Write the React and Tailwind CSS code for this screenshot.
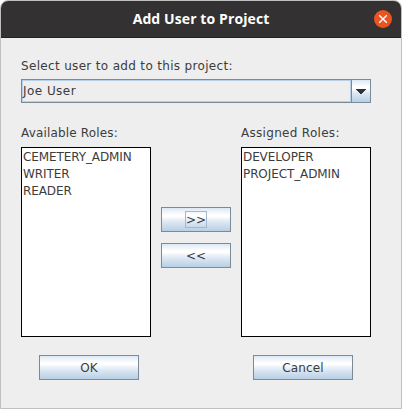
import React from "react";

function SwingButton({ children, className = "", focused = false }) {
  return (
    <button
      type="button"
      className={`flex h-[25px] items-center justify-center border border-[#7a8a99] bg-[linear-gradient(to_bottom,#dde8f3_0%,#ffffff_30%,#ffffff_36%,#dde8f3_60%,#b8cfe5_100%)] text-[12px] leading-[14px] ${className}`}
    >
      <span className={focused ? "flex h-[17px] w-[22px] items-center justify-center border border-[#a3b8cc]" : ""}>
        {children}
      </span>
    </button>
  );
}

function RoleList({ label, roles, labelClass }) {
  return (
    <section className="w-[130px]">
      <h2 className={`h-[21px] whitespace-nowrap leading-[14px] ${labelClass}`}>{label}</h2>
      <ul className="h-[190px] border border-black bg-white pl-px tracking-[-0.1px]">
        {roles.map((role) => (
          <li key={role} className="h-[17px] whitespace-nowrap leading-[18px]">{role}</li>
        ))}
      </ul>
    </section>
  );
}

export default function App() {
  return (
    <div className="h-[409px] w-[402px] bg-white">
      <main className="flex h-full w-full flex-col overflow-hidden rounded-t-[8px] border border-[#c0c0c0] bg-[#eeeeee] font-['DejaVu_Sans',sans-serif] text-[12px] text-[#3c3c3c]">
        <header className="grid h-[37px] shrink-0 grid-cols-[1fr_auto_1fr] items-center border-b border-[#222222] bg-[#333132] text-white">
          <h1 className="col-start-2 whitespace-nowrap font-['Open_Sans',sans-serif] text-[14px] leading-5 font-bold tracking-[0.1px]">Add User to Project</h1>
          <button type="button" aria-label="Close" className="mr-[9px] flex size-[18px] items-center justify-center justify-self-end rounded-full bg-[#e95420]">
            <svg width="18" height="18" viewBox="0 0 18 18" fill="none" stroke="white" strokeWidth="1.4">
              <path d="M5.2 5.2 12.8 12.8M12.8 5.2 5.2 12.8" />
            </svg>
          </button>
        </header>

        <div className="flex flex-col px-5 pt-[21px]">
          <label className="h-5 leading-[14px] tracking-[0.33px]">Select user to add to this project:</label>
          <div className="flex h-6 w-[350px] border border-[#7a8a99]">
            <div className="flex flex-1 items-center border border-[#b8cfe5] leading-[14px] tracking-[0.45px]">Joe User</div>
            <div className="flex w-[19px] justify-center border-l border-[#7a8a99] bg-[linear-gradient(to_bottom,#dde8f3_0%,#ffffff_30%,#ffffff_36%,#dde8f3_60%,#b8cfe5_100%)] pt-[9px]">
              <svg width="10" height="5" viewBox="0 0 10 5" fill="#333333" shapeRendering="crispEdges">
                <path d="M0 0H10V1H9V2H8V3H7V4H6V5H4V4H3V3H2V2H1V1H0Z" />
              </svg>
            </div>
          </div>

          <div className="mt-[23px] flex gap-[10px]">
            <RoleList label="Available Roles:" labelClass="tracking-[0.16px]" roles={["CEMETERY_ADMIN", "WRITER", "READER"]} />
            <div className="flex flex-col gap-[11px] pt-[81px]">
              <SwingButton className="w-[70px]" focused>{">>"}</SwingButton>
              <SwingButton className="w-[70px]">{"<<"}</SwingButton>
            </div>
            <RoleList label="Assigned Roles:" labelClass="tracking-[0.3px]" roles={["DEVELOPER", "PROJECT_ADMIN"]} />
          </div>

          <footer className="mt-[18px] flex gap-[114px] pl-[18px]">
            <SwingButton className="w-[100px]">OK</SwingButton>
            <SwingButton className="w-[100px] tracking-[0.15px]">Cancel</SwingButton>
          </footer>
        </div>
      </main>
    </div>
  );
}
